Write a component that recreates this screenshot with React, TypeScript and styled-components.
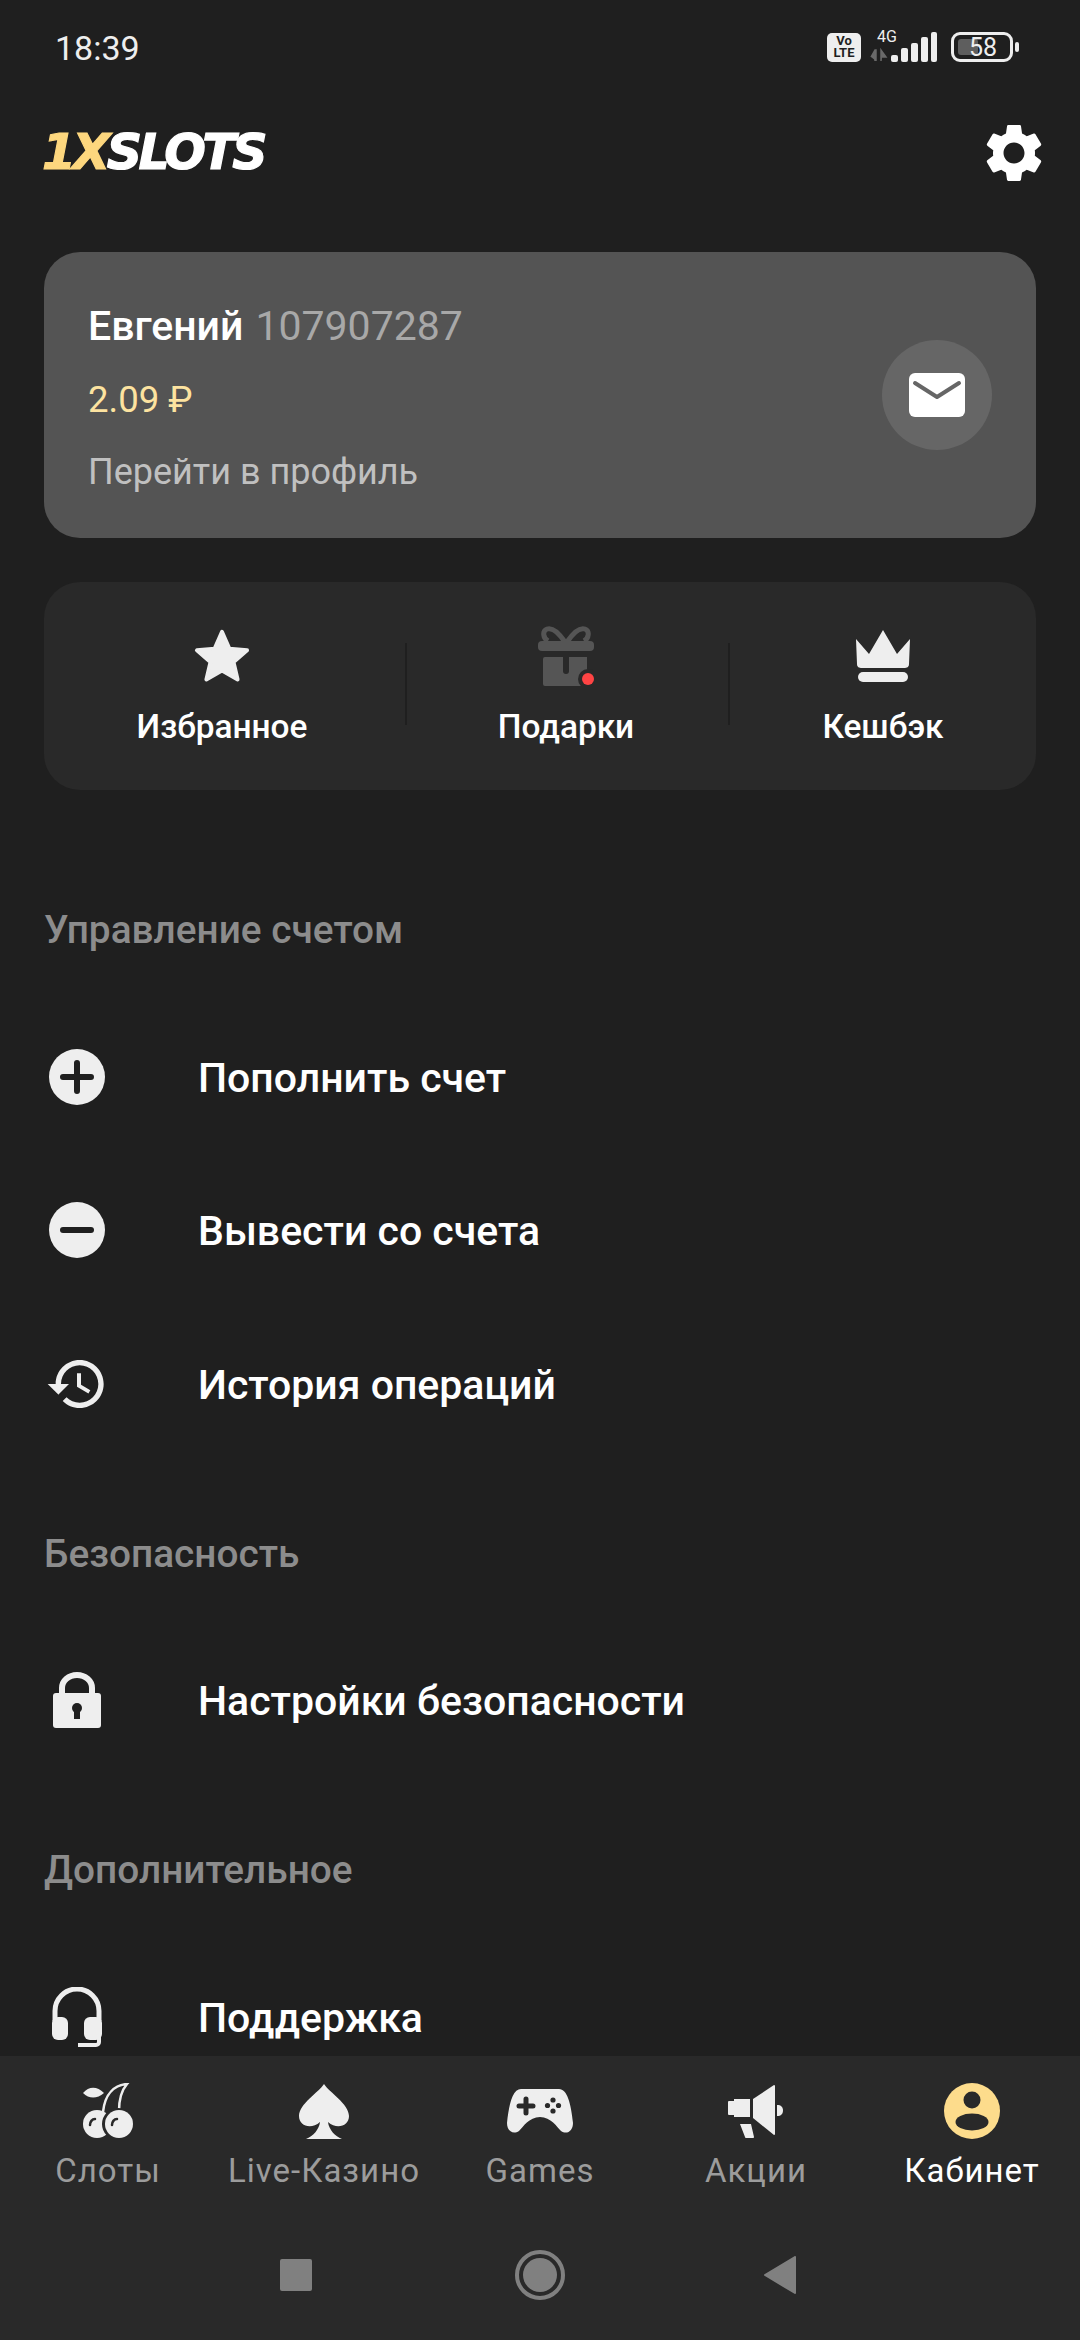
import styled, { createGlobalStyle } from 'styled-components';

const GlobalStyle = createGlobalStyle`
    html, body {
        margin: 0;
        padding: 0;
        background: #1f1f1f;
    }
    * {
        box-sizing: border-box;
    }
`;

const Page = styled.div`
    width: 1080px;
    height: 2340px;
    display: flex;
    flex-direction: column;
    overflow: hidden;
    background: #1f1f1f;
    font-family: Roboto, "Liberation Sans", sans-serif;
    color: #fff;
`;

const Content = styled.div`
    flex: 1;
    min-height: 0;
    overflow: hidden;
`;

const StatusBar = styled.div`
    height: 96px;
    padding: 0 67px 0 55px;
    display: flex;
    align-items: center;
    justify-content: space-between;
`;

const Time = styled.span`
    font-size: 34px;
    color: #eee;
    line-height: 40px;
`;

const StatusIcons = styled.div`
    display: flex;
    align-items: center;
    height: 32px;
    margin-top: -2px;
`;

const VoLte = styled.div`
    width: 34px;
    height: 29px;
    border-radius: 5px;
    background: #eee;
    color: #1f1f1f;
    font-size: 13px;
    font-weight: 700;
    line-height: 12.5px;
    text-align: center;
    padding-top: 2px;
    margin-right: 9px;
`;

const Network = styled.div`
    position: relative;
    width: 68px;
    height: 30px;
    margin-right: 13px;
`;

const FourG = styled.span`
    position: absolute;
    top: -3px;
    left: 7px;
    font-size: 16px;
    line-height: 16px;
    color: #eee;
`;

const Battery = styled.div`
    position: relative;
    width: 62px;
    height: 30px;
    border: 3px solid #eee;
    border-radius: 9px;
    display: flex;
    align-items: center;
    justify-content: center;
    font-size: 25px;
    color: #eee;
    padding-left: 2px;

    &::before {
        content: '';
        position: absolute;
        left: 4px;
        top: 4px;
        bottom: 4px;
        width: 20px;
        background: #5e5e5e;
        border-radius: 3px;
    }

    &::after {
        content: '';
        position: absolute;
        right: -9px;
        top: 7px;
        width: 4px;
        height: 10px;
        border-radius: 2px;
        background: #eee;
    }

    span {
        position: relative;
    }
`;

const Header = styled.div`
    height: 114px;
    padding: 0 31px 0 42px;
    display: flex;
    align-items: center;
    justify-content: space-between;
`;

const Logo = styled.div`
    font-family: "DejaVu Sans", Roboto, sans-serif;
    font-size: 49px;
    font-weight: 700;
    font-style: italic;
    letter-spacing: -3.6px;
    line-height: 50px;
    -webkit-text-stroke: 1.2px currentColor;

    span {
        color: #fdd77e;
    }
`;

const ProfileCard = styled.div`
    margin: 42px 44px 0;
    height: 286px;
    padding: 0 44px;
    border-radius: 36px;
    background: #545454;
    display: flex;
    align-items: center;
    justify-content: space-between;
`;

const ProfileInfo = styled.div`
    display: flex;
    flex-direction: column;
    padding-top: 8px;
`;

const NameLine = styled.div`
    font-size: 41px;
    line-height: 48px;
    font-weight: 500;
    margin-top: -1px;

    span {
        font-weight: 400;
        color: #a8a8a8;
        margin-left: 12px;
    }
`;

const Balance = styled.div`
    font-size: 36.5px;
    line-height: 46px;
    color: #fde3a0;
    margin-top: 27px;
`;

const ProfileLink = styled.div`
    font-size: 36px;
    line-height: 46px;
    color: #c0c0c0;
    margin-top: 26px;
`;

const MailButton = styled.div`
    width: 110px;
    height: 110px;
    border-radius: 50%;
    background: #666;
    display: flex;
    align-items: center;
    justify-content: center;
`;

const Tiles = styled.div`
    margin: 44px 44px 0;
    height: 208px;
    border-radius: 36px;
    background: #292929;
    display: flex;
    align-items: center;
`;

const Tile = styled.div<{ $width: number; $inset?: number }>`
    width: ${p => p.$width}px;
    padding-right: ${p => p.$inset ?? 0}px;
    display: flex;
    flex-direction: column;
    align-items: center;
`;

const TileIcon = styled.div`
    height: 60px;
    display: flex;
    align-items: center;
    justify-content: center;
`;

const TileLabel = styled.div`
    font-size: 33.4px;
    line-height: 40px;
    font-weight: 500;
    margin-top: 21px;
`;

const Divider = styled.div`
    width: 2px;
    height: 82px;
    background: #1f1f1f;
    margin-top: -4px;
`;

const SectionTitle = styled.div<{ $top: number }>`
    margin: ${p => p.$top}px 44px 41px;
    height: 60px;
    padding-top: 1px;
    line-height: 60px;
    font-size: 38.8px;
    font-weight: 500;
    color: #8c8c8c;
`;

const Row = styled.div`
    height: 153.5px;
    padding-left: 44px;
    display: flex;
    align-items: center;
`;

const RowIcon = styled.div`
    width: 66px;
    margin-right: 88px;
    display: flex;
    align-items: center;
    justify-content: center;
`;

const RowLabel = styled.div`
    font-size: 41px;
    font-weight: 500;
    line-height: 50px;
    margin-top: 2px;
`;

const BottomNav = styled.div`
    height: 284px;
    background: #292929;
`;

const NavItems = styled.div`
    display: grid;
    grid-template-columns: repeat(5, 216px);
    padding-top: 27px;
`;

const NavItem = styled.div`
    display: flex;
    flex-direction: column;
    align-items: center;
`;

const NavIcon = styled.div`
    height: 56px;
    display: flex;
    align-items: center;
    justify-content: center;
`;

const NavLabel = styled.div<{ $active?: boolean }>`
    margin-top: 12px;
    font-size: 33px;
    line-height: 40px;
    letter-spacing: 1px;
    color: ${p => (p.$active ? '#fff' : '#9c9c9c')};
    white-space: nowrap;
`;

const SystemNav = styled.div`
    display: grid;
    grid-template-columns: 240px 248px 232px;
    padding-left: 176px;
    margin-top: 35px;
    height: 98px;
`;

const SystemButton = styled.div`
    display: flex;
    align-items: center;
    justify-content: center;
`;

const LIGHT = '#eeeeee';
const DARK = '#292929';

const Signal = () => (
    <svg width="68" height="30" viewBox="0 0 68 30" style={{ position: 'absolute', left: 0, top: 0 }}>
        <path d="M5 18v11M1 25l4-7 1 0v11M11 29V18l5 7h-4" fill="#6a6a6a" stroke="#6a6a6a" strokeWidth="1.5" />
        <rect x="21" y="23" width="7" height="7" rx="2" fill={LIGHT} />
        <rect x="31" y="16" width="7" height="14" rx="2" fill={LIGHT} />
        <rect x="41" y="11" width="7" height="19" rx="2" fill={LIGHT} />
        <rect x="51" y="5" width="7" height="25" rx="2" fill={LIGHT} />
        <rect x="61" y="0" width="6" height="30" rx="2" fill={LIGHT} />
    </svg>
);

const GearIcon = () => (
    <svg width="70" height="70" viewBox="0 0 24 24" fill="#fff">
        <path d="M19.14,12.94c0.04-0.3,0.06-0.61,0.06-0.94c0-0.32-0.02-0.64-0.07-0.94l2.03-1.58c0.18-0.14,0.23-0.41,0.12-0.61l-1.92-3.32c-0.12-0.22-0.37-0.29-0.59-0.22l-2.39,0.96c-0.5-0.38-1.03-0.7-1.62-0.94L14.4,2.81c-0.04-0.24-0.24-0.41-0.48-0.41h-3.84c-0.24,0-0.43,0.17-0.47,0.41L9.25,5.35C8.66,5.59,8.12,5.92,7.63,6.29L5.24,5.33c-0.22-0.08-0.47,0-0.59,0.22L2.74,8.87C2.62,9.08,2.66,9.34,2.86,9.48l2.03,1.58C4.84,11.36,4.8,11.69,4.8,12s0.02,0.64,0.07,0.94l-2.03,1.58c-0.18,0.14-0.23,0.41-0.12,0.61l1.92,3.32c0.12,0.22,0.37,0.29,0.59,0.22l2.39-0.96c0.5,0.38,1.03,0.7,1.62,0.94l0.36,2.54c0.05,0.24,0.24,0.41,0.48,0.41h3.84c0.24,0,0.44-0.17,0.47-0.41l0.36-2.54c0.59-0.24,1.13-0.56,1.62-0.94l2.39,0.96c0.22,0.08,0.47,0,0.59-0.22l1.92-3.32c0.12-0.22,0.07-0.47-0.12-0.61L19.14,12.94z M12,15.6c-1.98,0-3.6-1.62-3.6-3.6s1.62-3.6,3.6-3.6s3.6,1.62,3.6,3.6S13.98,15.6,12,15.6z" />
    </svg>
);

const MailIcon = () => (
    <svg width="56" height="44" viewBox="0 0 56 44">
        <rect width="56" height="44" rx="6" fill="#fff" />
        <path d="M6 10l22 14 22-14" fill="none" stroke="#666" strokeWidth="4" strokeLinecap="round" strokeLinejoin="round" />
    </svg>
);

const StarIcon = () => (
    <svg width="56" height="55" viewBox="0 0 58 55">
        <path d="M29 3l7.6 17.4 18.4 1.7-14 12.3 4.2 18L29 43l-16.2 9.4 4.2-18-14-12.3 18.4-1.7z" fill={LIGHT} stroke={LIGHT} strokeWidth="4" strokeLinejoin="round" />
    </svg>
);

const GiftIcon = () => (
    <svg width="58" height="60" viewBox="0 0 58 60" fill="#555">
        <path d="M28 16C22 7 16 1 10 3 5 5 6 12 11 15M30 16C36 7 42 1 48 3 53 5 52 12 47 15" fill="none" stroke="#555" strokeWidth="5" />
        <rect x="1" y="15" width="56" height="10" rx="4" />
        <path d="M8 31h18v14a3 3 0 0 0 6 0V31h18v29H8a2 2 0 0 1-2-2V33a2 2 0 0 1 2-2z" />
        <circle cx="51" cy="53" r="10" fill={DARK} />
        <circle cx="51" cy="53" r="6" fill="#ff4444" />
    </svg>
);

const CrownIcon = () => (
    <svg width="56" height="52" viewBox="0 0 56 52" fill={LIGHT}>
        <path d="M1 9l13 15L28 0l14 24L55 9l-1 25c0 3-2 4-5 4H7c-3 0-5-1-5-4z" />
        <rect x="3" y="42" width="50" height="10" rx="5" />
    </svg>
);

const PlusCircleIcon = () => (
    <svg width="56" height="56" viewBox="0 0 56 56">
        <circle cx="28" cy="28" r="28" fill={LIGHT} />
        <path d="M14 28h28M28 14v28" stroke="#1f1f1f" strokeWidth="6" strokeLinecap="round" />
    </svg>
);

const MinusCircleIcon = () => (
    <svg width="56" height="56" viewBox="0 0 56 56">
        <circle cx="28" cy="28" r="28" fill={LIGHT} />
        <path d="M14 28h28" stroke="#1f1f1f" strokeWidth="6" strokeLinecap="round" />
    </svg>
);

const HistoryIcon = () => (
    <svg width="64" height="64" viewBox="0 0 24 24" fill={LIGHT}>
        <path d="M13 3c-4.97 0-9 4.03-9 9H1l3.89 3.89.07.14L9 12H6c0-3.87 3.13-7 7-7s7 3.13 7 7-3.13 7-7 7c-1.93 0-3.68-.79-4.94-2.06l-1.42 1.42C8.27 19.99 10.51 21 13 21c4.97 0 9-4.03 9-9s-4.03-9-9-9zm-1 5v5l4.28 2.54.72-1.21-3.5-2.08V8H12z" />
    </svg>
);

const LockIcon = () => (
    <svg width="48" height="56" viewBox="0 0 48 56" fill={LIGHT}>
        <path d="M9 24v-8a15 13 0 0 1 30 0v8" fill="none" stroke={LIGHT} strokeWidth="6" />
        <rect y="21" width="48" height="35" rx="3" />
        <circle cx="24" cy="36" r="5" fill="#1f1f1f" />
        <rect x="21" y="36" width="6" height="11" fill="#1f1f1f" />
    </svg>
);

const HeadsetIcon = () => (
    <svg width="50" height="60" viewBox="0 0 50 60" fill={LIGHT}>
        <path d="M3 34V24a22 22 0 0 1 44 0v10" fill="none" stroke={LIGHT} strokeWidth="5" />
        <rect x="0" y="30" width="16" height="23" rx="6" />
        <rect x="32" y="30" width="18" height="23" rx="6" />
        <path d="M47 50v5a3 3 0 0 1-3 3H26" fill="none" stroke={LIGHT} strokeWidth="4" />
    </svg>
);

const CherryIcon = () => (
    <svg width="50" height="56" viewBox="0 0 50 56" fill={LIGHT}>
        <path d="M0 10C6 3 14 3 21 10 14 16 6 16 0 10z" />
        <path d="M36 28C36 18 38 8 44 1 32 2 22 10 20 29" fill="none" stroke={LIGHT} strokeWidth="2.5" />
        <circle cx="14" cy="41" r="14" />
        <circle cx="35" cy="41" r="16" fill={DARK} />
        <circle cx="36" cy="41" r="14" />
        <path d="M7 42c0-3 2-6 5-6M29 42c0-3 2-6 5-6" fill="none" stroke={DARK} strokeWidth="2.5" strokeLinecap="round" />
    </svg>
);

const SpadeIcon = () => (
    <svg width="50" height="55" viewBox="0 0 50 55" fill={LIGHT}>
        <path d="M25 0C30 8 50 20 50 32 50 42 38 46 29 38 30 46 36 52 43 55L7 55C14 52 20 46 21 38 12 46 0 42 0 32 0 20 20 8 25 0z" />
    </svg>
);

const GamepadIcon = () => (
    <svg width="66" height="44" viewBox="0 0 66 44" fill={LIGHT}>
        <path d="M14 0H52C60 0 64 14 66 34 66 42 60 46 54 42 50 38 44 28 33 28 22 28 16 38 12 42 6 46 0 42 0 34 2 14 6 0 14 0z" />
        <path d="M19 10v14M12 17h14" stroke={DARK} strokeWidth="5" strokeLinecap="round" />
        <circle cx="46" cy="11" r="2.6" fill={DARK} />
        <circle cx="46" cy="22" r="2.6" fill={DARK} />
        <circle cx="40.5" cy="16.5" r="2.6" fill={DARK} />
        <circle cx="51.5" cy="16.5" r="2.6" fill={DARK} />
    </svg>
);

const MegaphoneIcon = () => (
    <svg width="56" height="53" viewBox="0 0 56 53" fill={LIGHT}>
        <path d="M4 16h2v-2h16v18H6v-2H1a1 1 0 0 1-1-1V17a1 1 0 0 1 1-1z" />
        <path d="M25 14L46 0a1 1 0 0 1 1 1v48a1 1 0 0 1-1 1L25 33z" />
        <path d="M49 20c4 0 6 2 6 5.5S53 31 49 31z" />
        <path d="M12 39h11l3 13c0 1-1 1-1 1h-7a1 1 0 0 1-1-1z" />
    </svg>
);

const AccountIcon = () => (
    <svg width="56" height="56" viewBox="0 0 56 56">
        <circle cx="28" cy="28" r="28" fill="#fddc8c" />
        <circle cx="28" cy="17" r="8.5" fill={DARK} />
        <ellipse cx="28" cy="39" rx="16.5" ry="8.5" fill={DARK} />
    </svg>
);

const accountRows = [
    { label: 'Пополнить счет', icon: <PlusCircleIcon /> },
    { label: 'Вывести со счета', icon: <MinusCircleIcon /> },
    { label: 'История операций', icon: <HistoryIcon /> },
];

const navItems = [
    { label: 'Слоты', icon: <CherryIcon /> },
    { label: 'Live-Казино', icon: <SpadeIcon /> },
    { label: 'Games', icon: <GamepadIcon /> },
    { label: 'Акции', icon: <MegaphoneIcon /> },
    { label: 'Кабинет', icon: <AccountIcon />, active: true },
];

const App = () => {
    return (
        <Page>
            <GlobalStyle />
            <Content>
                <StatusBar>
                    <Time>18:39</Time>
                    <StatusIcons>
                        <VoLte>Vo<br />LTE</VoLte>
                        <Network>
                            <FourG>4G</FourG>
                            <Signal />
                        </Network>
                        <Battery><span>58</span></Battery>
                    </StatusIcons>
                </StatusBar>

                <Header>
                    <Logo><span>1X</span>SLOTS</Logo>
                    <GearIcon />
                </Header>

                <ProfileCard>
                    <ProfileInfo>
                        <NameLine>Евгений<span>107907287</span></NameLine>
                        <Balance>2.09 ₽</Balance>
                        <ProfileLink>Перейти в профиль</ProfileLink>
                    </ProfileInfo>
                    <MailButton><MailIcon /></MailButton>
                </ProfileCard>

                <Tiles>
                    <Tile $width={361} $inset={5}>
                        <TileIcon><StarIcon /></TileIcon>
                        <TileLabel>Избранное</TileLabel>
                    </Tile>
                    <Divider />
                    <Tile $width={321} $inset={3}>
                        <TileIcon><GiftIcon /></TileIcon>
                        <TileLabel>Подарки</TileLabel>
                    </Tile>
                    <Divider />
                    <Tile $width={306}>
                        <TileIcon><CrownIcon /></TileIcon>
                        <TileLabel>Кешбэк</TileLabel>
                    </Tile>
                </Tiles>

                <SectionTitle $top={109}>Управление счетом</SectionTitle>
                {accountRows.map(row => (
                    <Row key={row.label}>
                        <RowIcon>{row.icon}</RowIcon>
                        <RowLabel>{row.label}</RowLabel>
                    </Row>
                ))}

                <SectionTitle $top={62}>Безопасность</SectionTitle>
                <Row>
                    <RowIcon><LockIcon /></RowIcon>
                    <RowLabel>Настройки безопасности</RowLabel>
                </Row>

                <SectionTitle $top={62}>Дополнительное</SectionTitle>
                <Row>
                    <RowIcon><HeadsetIcon /></RowIcon>
                    <RowLabel>Поддержка</RowLabel>
                </Row>
            </Content>

            <BottomNav>
                <NavItems>
                    {navItems.map(item => (
                        <NavItem key={item.label}>
                            <NavIcon>{item.icon}</NavIcon>
                            <NavLabel $active={item.active}>{item.label}</NavLabel>
                        </NavItem>
                    ))}
                </NavItems>
                <SystemNav>
                    <SystemButton>
                        <svg width="32" height="32" viewBox="0 0 32 32"><rect width="32" height="32" rx="2" fill="#808080" /></svg>
                    </SystemButton>
                    <SystemButton>
                        <svg width="50" height="50" viewBox="0 0 50 50">
                            <circle cx="25" cy="25" r="23" fill="none" stroke="#808080" strokeWidth="4" />
                            <circle cx="25" cy="25" r="17" fill="#808080" />
                        </svg>
                    </SystemButton>
                    <SystemButton>
                        <svg width="34" height="38" viewBox="0 0 34 38"><path d="M32 1v36L2 19z" fill="#808080" stroke="#808080" strokeWidth="2" strokeLinejoin="round" /></svg>
                    </SystemButton>
                </SystemNav>
            </BottomNav>
        </Page>
    );
};

export default App;
